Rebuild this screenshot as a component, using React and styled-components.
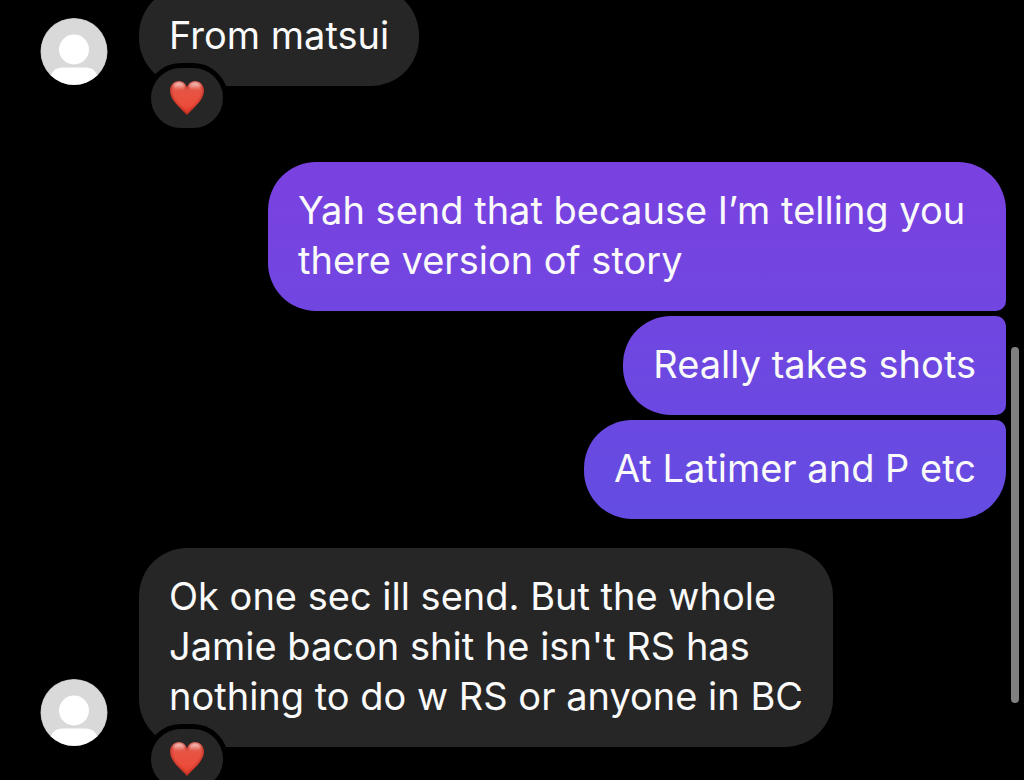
import React from "react";
import styled, { createGlobalStyle } from "styled-components";

const messages = [
  { id: 1, from: "them", liked: true, text: "From matsui" },
  {
    id: 2,
    from: "me",
    text: "Yah send that because I’m telling you there version of story",
  },
  { id: 3, from: "me", text: "Really takes shots" },
  { id: 4, from: "me", text: "At Latimer and P etc" },
  {
    id: 5,
    from: "them",
    liked: true,
    text: "Ok one sec ill send. But the whole\nJamie bacon shit he isn't RS has\nnothing to do w RS or anyone in BC",
  },
];

const heartPath =
  "M17 6C15.500 2.200 12.500 0 9 0C4 0 0 4 0 9.500C0 19 9 25.500 17 34C25 25.500 34 19 34 9.500C34 4 30 0 25 0C21.500 0 18.500 2.200 17 6Z";

const Avatar = () => (
  <AvatarIcon viewBox="0 0 68 68" aria-hidden="true">
    <clipPath id="avatarClip">
      <circle cx="34" cy="33.500" r="33.300" />
    </clipPath>
    <circle cx="34" cy="33.500" r="33.500" fill="#b4b4b4" />
    <circle cx="34" cy="33.500" r="33" fill="#d9d9d9" />
    <g clipPath="url(#avatarClip)" fill="#fff">
      <circle cx="34" cy="31.500" r="15" />
      <path d="M9 62C11 54 15 49.500 23 49.500H45C53 49.500 57 54 59 62V68H9Z" />
    </g>
  </AvatarIcon>
);

const Heart = () => (
  <HeartIcon viewBox="0 0 34 34" aria-hidden="true">
    <defs>
      <linearGradient id="heartFill" x1="0" y1="0" x2="0" y2="1">
        <stop offset="0" stopColor="#e2584a" />
        <stop offset="0.3" stopColor="#e65443" />
        <stop offset="0.7" stopColor="#ec4d3b" />
        <stop offset="1" stopColor="#dc3928" />
      </linearGradient>
      <linearGradient id="heartShine" x1="0" y1="0" x2="0" y2="1">
        <stop offset="0" stopColor="#fff" stopOpacity="0.75" />
        <stop offset="1" stopColor="#fff" stopOpacity="0" />
      </linearGradient>
      <filter id="heartSoft" x="-0.2" y="-0.2" width="1.4" height="1.4">
        <feGaussianBlur stdDeviation="0.8" />
      </filter>
      <clipPath id="heartClip">
        <path d={heartPath} />
      </clipPath>
    </defs>
    <g clipPath="url(#heartClip)">
      <path d={heartPath} fill="url(#heartFill)" />
      <path
        d={heartPath}
        fill="none"
        stroke="#b02c20"
        strokeWidth="2"
        filter="url(#heartSoft)"
      />
      <g fill="url(#heartShine)" filter="url(#heartSoft)">
        <ellipse cx="9" cy="5" rx="6" ry="4" />
        <ellipse cx="25" cy="5" rx="6" ry="4" />
      </g>
    </g>
  </HeartIcon>
);

export const Message = ({ message, first, last }) => {
  const { from, liked, text } = message;
  return (
    <Row $from={from} $first={first} $liked={liked}>
      {from === "them" && <Avatar />}
      <Bubble $from={from} $first={first} $last={last}>
        {text}
        {liked && (
          <Reaction>
            <Heart />
          </Reaction>
        )}
      </Bubble>
    </Row>
  );
};

export default function App() {
  return (
    <>
      <GlobalStyle />
      <Chat>
        <List>
          {messages.map((message, i) => (
            <Message
              key={message.id}
              message={message}
              first={messages[i - 1]?.from !== message.from}
              last={messages[i + 1]?.from !== message.from}
            />
          ))}
        </List>
        <ScrollThumb />
      </Chat>
    </>
  );
}

const GlobalStyle = createGlobalStyle`
  * {
    box-sizing: border-box;
  }
  body {
    margin: 0;
    background: #000;
    font-family: Inter, "Liberation Sans", sans-serif;
  }
`;
const Chat = styled.main`
  position: relative;
  height: 100vh;
  overflow: hidden;
  display: flex;
  flex-direction: column;
  justify-content: flex-end;
  padding: 0 18px 33px 40px;
`;
const List = styled.ol`
  list-style: none;
  margin: 0;
  padding: 0;
  display: flex;
  flex-direction: column;
  gap: 5px;
`;
const Row = styled.li`
  display: flex;
  align-items: flex-end;
  gap: 31px;
  justify-content: ${({ $from }) => ($from === "me" ? "flex-end" : "flex-start")};
  margin-top: ${({ $first }) => ($first ? "24px" : "0")};

  &:not(:last-child) {
    margin-bottom: ${({ $liked }) => ($liked ? "47px" : "0")};
  }
`;
const Bubble = styled.div`
  position: relative;
  max-width: 738px;
  padding: 23px 30px 26px;
  border-radius: 48px;
  border-top-right-radius: ${({ $from, $first }) => ($from === "me" && !$first ? "10px" : "48px")};
  border-bottom-right-radius: ${({ $from, $last }) => ($from === "me" && !$last ? "10px" : "48px")};
  background: ${({ $from }) =>
    $from === "me" ? "linear-gradient(#843ce0, #5454e2) fixed" : "#262626"};
  color: #fafafa;
  font-size: 38px;
  line-height: 50px;
  white-space: pre-line;
`;
const Reaction = styled.span`
  position: absolute;
  left: 7px;
  bottom: -47px;
  width: 82px;
  height: 70px;
  display: flex;
  justify-content: center;
  align-items: center;
  border: 5px solid #000;
  border-radius: 35px;
  background: #262626;
`;
const AvatarIcon = styled.svg`
  width: 68px;
  height: 68px;
  flex-shrink: 0;
`;
const HeartIcon = styled.svg`
  width: 34px;
  height: 34px;
`;
const ScrollThumb = styled.div`
  position: absolute;
  right: 5px;
  bottom: 77px;
  width: 8px;
  height: 356px;
  border-radius: 4px;
  background: #808080;
`;
